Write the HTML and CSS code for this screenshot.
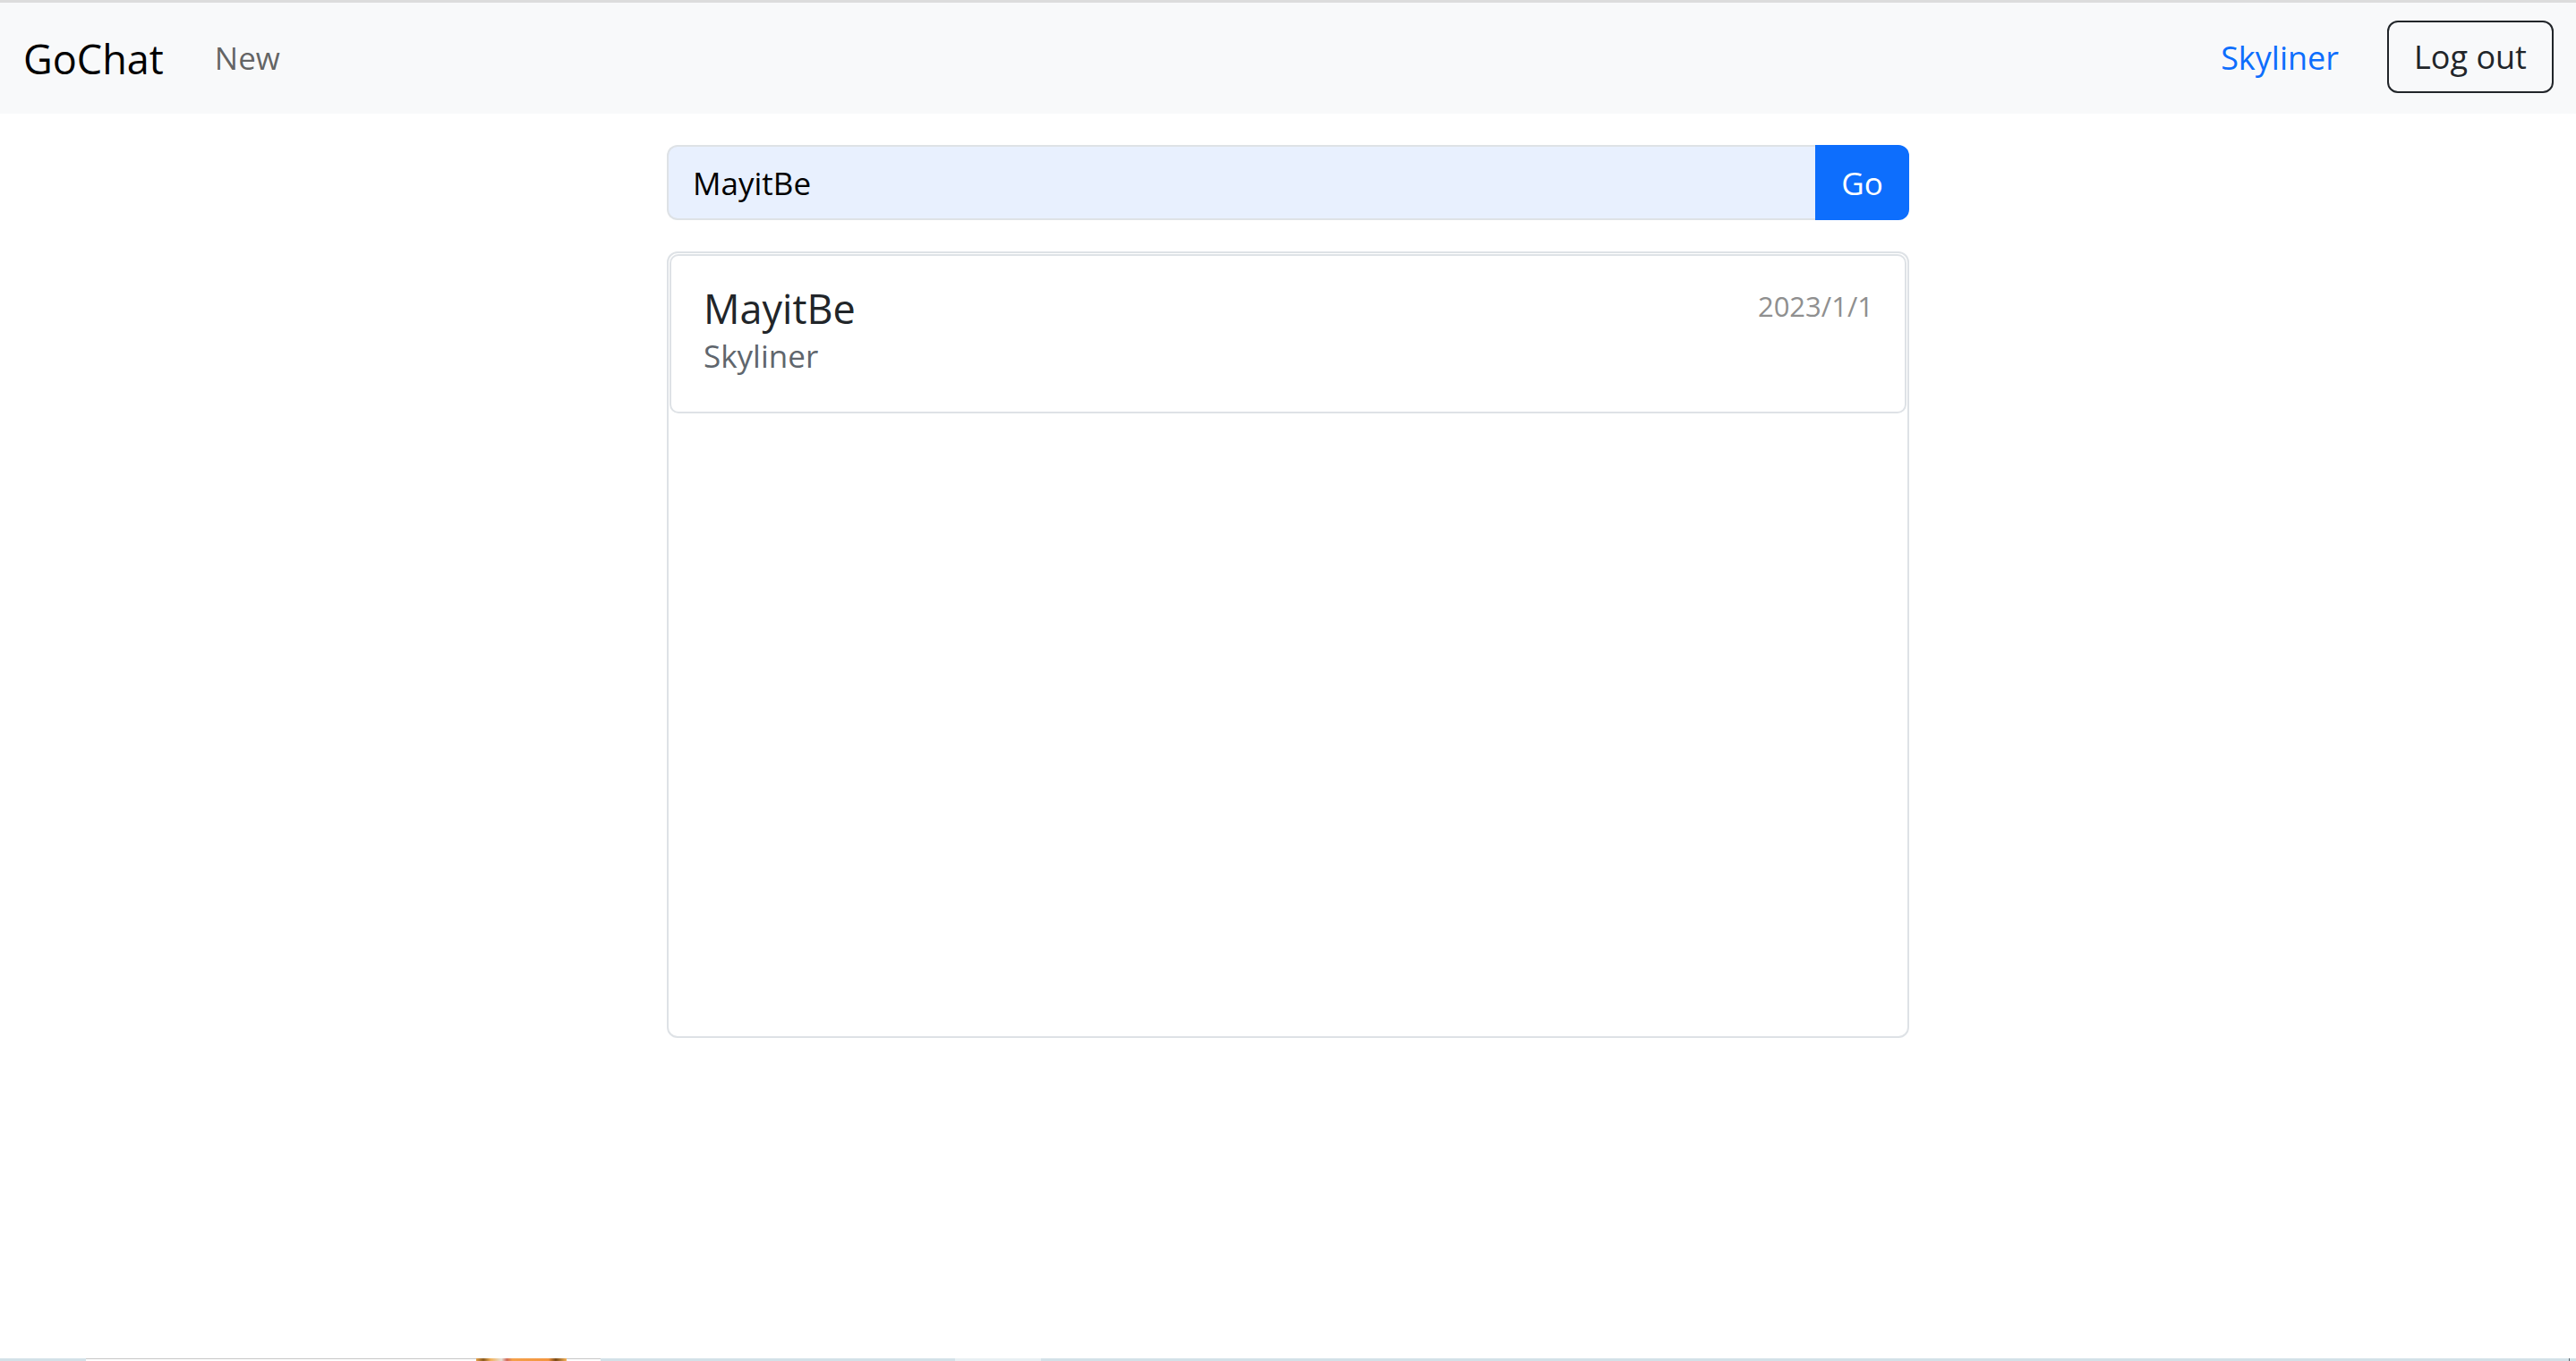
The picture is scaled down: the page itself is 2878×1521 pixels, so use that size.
FILE: index.html
```html
<!DOCTYPE html>
<html lang="en">
<head>
<meta charset="utf-8">
<title>GoChat</title>
<link rel="stylesheet" href="styles.css">
</head>
<body>
<div class="page">
  <nav class="navbar">
    <div class="nav-left">
      <a class="brand" href="#">GoChat</a>
      <a class="nav-link" href="#">New</a>
    </div>
    <div class="nav-right">
      <a class="user-link" href="#">Skyliner</a>
      <button class="btn-logout" type="button">Log out</button>
    </div>
  </nav>

  <main class="content">
    <form class="search-group">
      <input class="search-input" type="text" value="MayitBe">
      <button class="btn-go" type="button">Go</button>
    </form>

    <div class="room-list">
      <a class="room-item" href="#">
        <div class="room-main">
          <div class="room-title">MayitBe</div>
          <div class="room-owner">Skyliner</div>
        </div>
        <div class="room-date">2023/1/1</div>
      </a>
    </div>
  </main>

  <div class="taskbar">
    <span class="tb-seg tb-base-a"></span>
    <span class="tb-seg tb-window-a"></span>
    <span class="tb-seg tb-icon"></span>
    <span class="tb-seg tb-window-b"></span>
    <span class="tb-seg tb-base-b"></span>
    <span class="tb-seg tb-light"></span>
    <span class="tb-seg tb-base-c"></span>
    <span class="tb-seg tb-tick"></span>
    <span class="tb-seg tb-base-d"></span>
  </div>
</div>
</body>
</html>
```

FILE: styles.css
```css
* {
  box-sizing: border-box;
}

html, body {
  margin: 0;
  padding: 0;
  background: #ffffff;
}

body {
  font-family: "Open Sans", "Noto Sans", "Liberation Sans", sans-serif;
  color: #212529;
}

a {
  text-decoration: none;
}

.page {
  min-height: 100vh;
  display: flex;
  flex-direction: column;
}

/* ---------- navbar ---------- */
.navbar {
  height: 127px;
  border-top: 3px solid #dcdcdc;
  background: #f8f9fa;
  display: flex;
  align-items: center;
  justify-content: space-between;
  padding: 0 25px 0 26px;
}

.nav-left,
.nav-right {
  display: flex;
  align-items: center;
}

.brand {
  font-size: 45px;
  line-height: 54px;
  color: #000000;
  margin-right: 57px;
  margin-top: 2px;
}

.nav-link {
  font-size: 35px;
  line-height: 42px;
  color: rgba(0, 0, 0, 0.62);
}

.user-link {
  font-size: 36px;
  line-height: 42px;
  color: #0d6efd;
  margin-right: 54px;
}

.btn-logout {
  width: 186px;
  height: 81px;
  border: 2px solid #212529;
  border-radius: 12px;
  background: transparent;
  font-family: inherit;
  font-size: 36px;
  color: #212529;
  padding: 0;
  margin-top: -3px;
}

/* ---------- content ---------- */
.content {
  width: 1388px;
  margin: 35px auto 0 auto;
  display: flex;
  flex-direction: column;
  gap: 35px;
}

.search-group {
  display: flex;
  height: 84px;
  margin: 0;
}

.search-input {
  flex: 1;
  min-width: 0;
  height: 84px;
  border: 2px solid #dee2e6;
  border-right: none;
  border-radius: 12px 0 0 12px;
  background: #e8f0fe;
  font-family: inherit;
  font-size: 35px;
  color: #000000;
  padding: 0 27px;
  outline: none;
}

.btn-go {
  width: 105px;
  height: 84px;
  border: none;
  border-radius: 0 12px 12px 0;
  background: #0d6efd;
  color: #ffffff;
  font-family: inherit;
  font-size: 35px;
  padding: 0;
}

.room-list {
  height: 879px;
  border: 2px solid #dee2e6;
  border-radius: 12px;
  padding: 1px;
}

.room-item {
  display: flex;
  justify-content: space-between;
  align-items: flex-start;
  height: 178px;
  border: 2px solid #dee2e6;
  border-radius: 10px;
  padding: 32px 35px 0 36px;
  color: #212529;
}

.room-title {
  font-size: 45px;
  line-height: 54px;
  color: #212529;
}

.room-owner {
  font-size: 35px;
  line-height: 42px;
  margin-top: 5px;
  color: #5f666d;
}

.room-date {
  font-size: 31px;
  line-height: 38px;
  margin-top: 5px;
  color: #8f8f8f;
}

/* ---------- bottom taskbar sliver ---------- */
.taskbar {
  margin-top: auto;
  height: 3px;
  display: flex;
  background: #d3e1e8;
}

.tb-seg {
  display: block;
  height: 3px;
}

.tb-base-a { width: 96px; }
.tb-window-a {
  width: 436px;
  background: #ffffff;
  border-top: 1px solid #c6c6c6;
}
.tb-icon {
  width: 101px;
  background: linear-gradient(90deg, #e5a24a 0%, #8a5a1e 8%, #f2b25a 16%, #e6e0d8 28%, #d06a5a 34%, #f4a04a 40%, #f39640 80%, #7a4a16 88%, #f6b45a 100%);
}
.tb-window-b {
  width: 38px;
  background: #ffffff;
  border-top: 1px solid #c6c6c6;
}
.tb-base-b { width: 396px; }
.tb-light {
  width: 96px;
  background: #e8f0f3;
}
.tb-base-c { width: 1707px; }
.tb-tick {
  width: 1px;
  background: #5a646a;
}
.tb-base-d { flex: 1; }
```
